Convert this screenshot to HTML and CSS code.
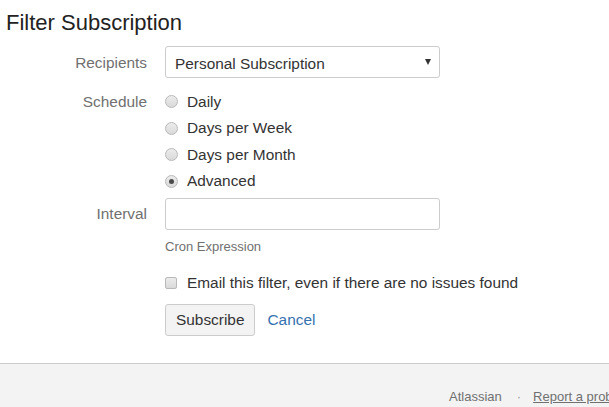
FILE: index.html
```html
<!DOCTYPE html>
<html lang="en">
<head>
<meta charset="utf-8">
<title>Filter Subscription</title>
<link rel="stylesheet" href="styles.css">
</head>
<body>
<h1 class="title">Filter Subscription</h1>
<form class="form">
  <div class="row row-recipients">
    <label class="lbl lbl-tall" for="recipients">Recipients</label>
    <div class="field">
      <div class="select-wrap">
        <select id="recipients" class="select">
          <option>Personal Subscription</option>
        </select>
        <span class="select-arrow"></span>
      </div>
    </div>
  </div>
  <div class="row row-schedule">
    <span class="lbl lbl-radio">Schedule</span>
    <div class="field options">
      <label class="option"><input type="radio" name="schedule" class="radio"><span>Daily</span></label>
      <label class="option"><input type="radio" name="schedule" class="radio"><span>Days per Week</span></label>
      <label class="option"><input type="radio" name="schedule" class="radio"><span>Days per Month</span></label>
      <label class="option"><input type="radio" name="schedule" class="radio" checked><span>Advanced</span></label>
    </div>
  </div>
  <div class="row row-interval">
    <label class="lbl lbl-tall lbl-interval" for="interval">Interval</label>
    <div class="field">
      <input id="interval" type="text" class="text">
      <div class="description">Cron Expression</div>
    </div>
  </div>
  <div class="row row-check">
    <span class="lbl"></span>
    <label class="field option check-option"><input type="checkbox" class="checkbox"><span>Email this filter, even if there are no issues found</span></label>
  </div>
  <div class="row row-buttons">
    <span class="lbl"></span>
    <div class="field buttons">
      <button type="button" class="button">Subscribe</button>
      <a href="#" class="cancel">Cancel</a>
    </div>
  </div>
</form>
<footer class="footer">
  <span class="footer-item">Atlassian</span>
  <span class="footer-sep">·</span>
  <a href="#" class="footer-link">Report a problem</a>
</footer>
</body>
</html>
```

FILE: styles.css
```css
html, body {
  margin: 0;
  padding: 0;
}
body {
  width: 609px;
  height: 407px;
  overflow: hidden;
  font-family: "Liberation Sans", Arial, sans-serif;
  font-size: 15.4px;
  color: #333333;
  background: #ffffff;
}
.title {
  margin: 10px 0 0 6px;
  font-size: 22px;
  line-height: 26px;
  font-weight: normal;
  color: #222222;
}
.form {
  margin: 0;
}
.row {
  display: grid;
  grid-template-columns: 147px 1fr;
  column-gap: 18px;
}
.lbl {
  text-align: right;
  color: #707070;
}
.lbl-tall {
  line-height: 32px;
  padding-top: 1px;
}
.lbl-interval {
  padding-top: 0;
}
.lbl-radio {
  line-height: 26.5px;
}
.row-recipients {
  margin-top: 10px;
}
.select-wrap {
  position: relative;
  width: 275px;
  height: 32px;
}
.select {
  appearance: none;
  -webkit-appearance: none;
  box-sizing: border-box;
  width: 275px;
  height: 32px;
  margin: 0;
  padding: 2px 0 0 9px;
  border: 1px solid #cccccc;
  border-radius: 3px;
  background: #ffffff;
  font-family: inherit;
  font-size: 15.4px;
  color: #333333;
}
.select-arrow {
  position: absolute;
  right: 9px;
  top: 13px;
  width: 0;
  height: 0;
  border-left: 3px solid transparent;
  border-right: 3px solid transparent;
  border-top: 6px solid #333333;
}
.row-schedule {
  margin-top: 9.5px;
}
.options {
  display: flex;
  flex-direction: column;
}
.option {
  display: flex;
  align-items: center;
  height: 26.5px;
  gap: 9px;
  color: #333333;
}
.radio {
  appearance: none;
  -webkit-appearance: none;
  flex-shrink: 0;
  box-sizing: border-box;
  width: 13px;
  height: 13px;
  margin: 0;
  border: 1px solid #b9b9b9;
  border-radius: 50%;
  background: linear-gradient(#ececec, #d9d9d9);
  position: relative;
}
.radio:checked::after {
  content: "";
  position: absolute;
  left: 3px;
  top: 3px;
  width: 5px;
  height: 5px;
  border-radius: 50%;
  background: #4a4a4a;
}
.row-interval {
  margin-top: 3.5px;
}
.text {
  box-sizing: border-box;
  display: block;
  width: 275px;
  height: 32px;
  margin: 0;
  border: 1px solid #cccccc;
  border-radius: 3px;
  background: #ffffff;
  font-family: inherit;
  font-size: 15.4px;
}
.description {
  margin-top: 8px;
  font-size: 13px;
  line-height: 18px;
  color: #707070;
}
.row-check {
  margin-top: 13px;
}
.check-option {
  height: 27px;
  gap: 10px;
  white-space: nowrap;
}
.checkbox {
  appearance: none;
  -webkit-appearance: none;
  flex-shrink: 0;
  box-sizing: border-box;
  width: 12px;
  height: 12px;
  margin: 0;
  border: 1px solid #b9b9b9;
  border-radius: 2px;
  background: linear-gradient(#ececec, #d9d9d9);
}
.row-buttons {
  margin-top: 8px;
}
.buttons {
  display: flex;
  align-items: center;
  gap: 12px;
}
.button {
  box-sizing: border-box;
  height: 32px;
  margin: 0;
  padding: 0 10px;
  border: 1px solid #cccccc;
  border-radius: 3px;
  background: #f3f3f3;
  font-family: inherit;
  font-size: 15.4px;
  color: #333333;
}
.cancel {
  color: #3572b0;
  text-decoration: none;
}
.footer {
  display: flex;
  margin-top: 27px;
  border-top: 1px solid #cccccc;
  background: #f3f3f3;
  height: 60px;
  box-sizing: border-box;
  padding: 23.5px 0 0 449px;
  font-size: 13px;
  line-height: 18px;
  white-space: nowrap;
  color: #707070;
}
.footer-sep {
  margin: 0 12px 0 15px;
  color: #999999;
}
.footer-link {
  flex-shrink: 0;
  color: #707070;
  text-decoration: underline;
}
```
